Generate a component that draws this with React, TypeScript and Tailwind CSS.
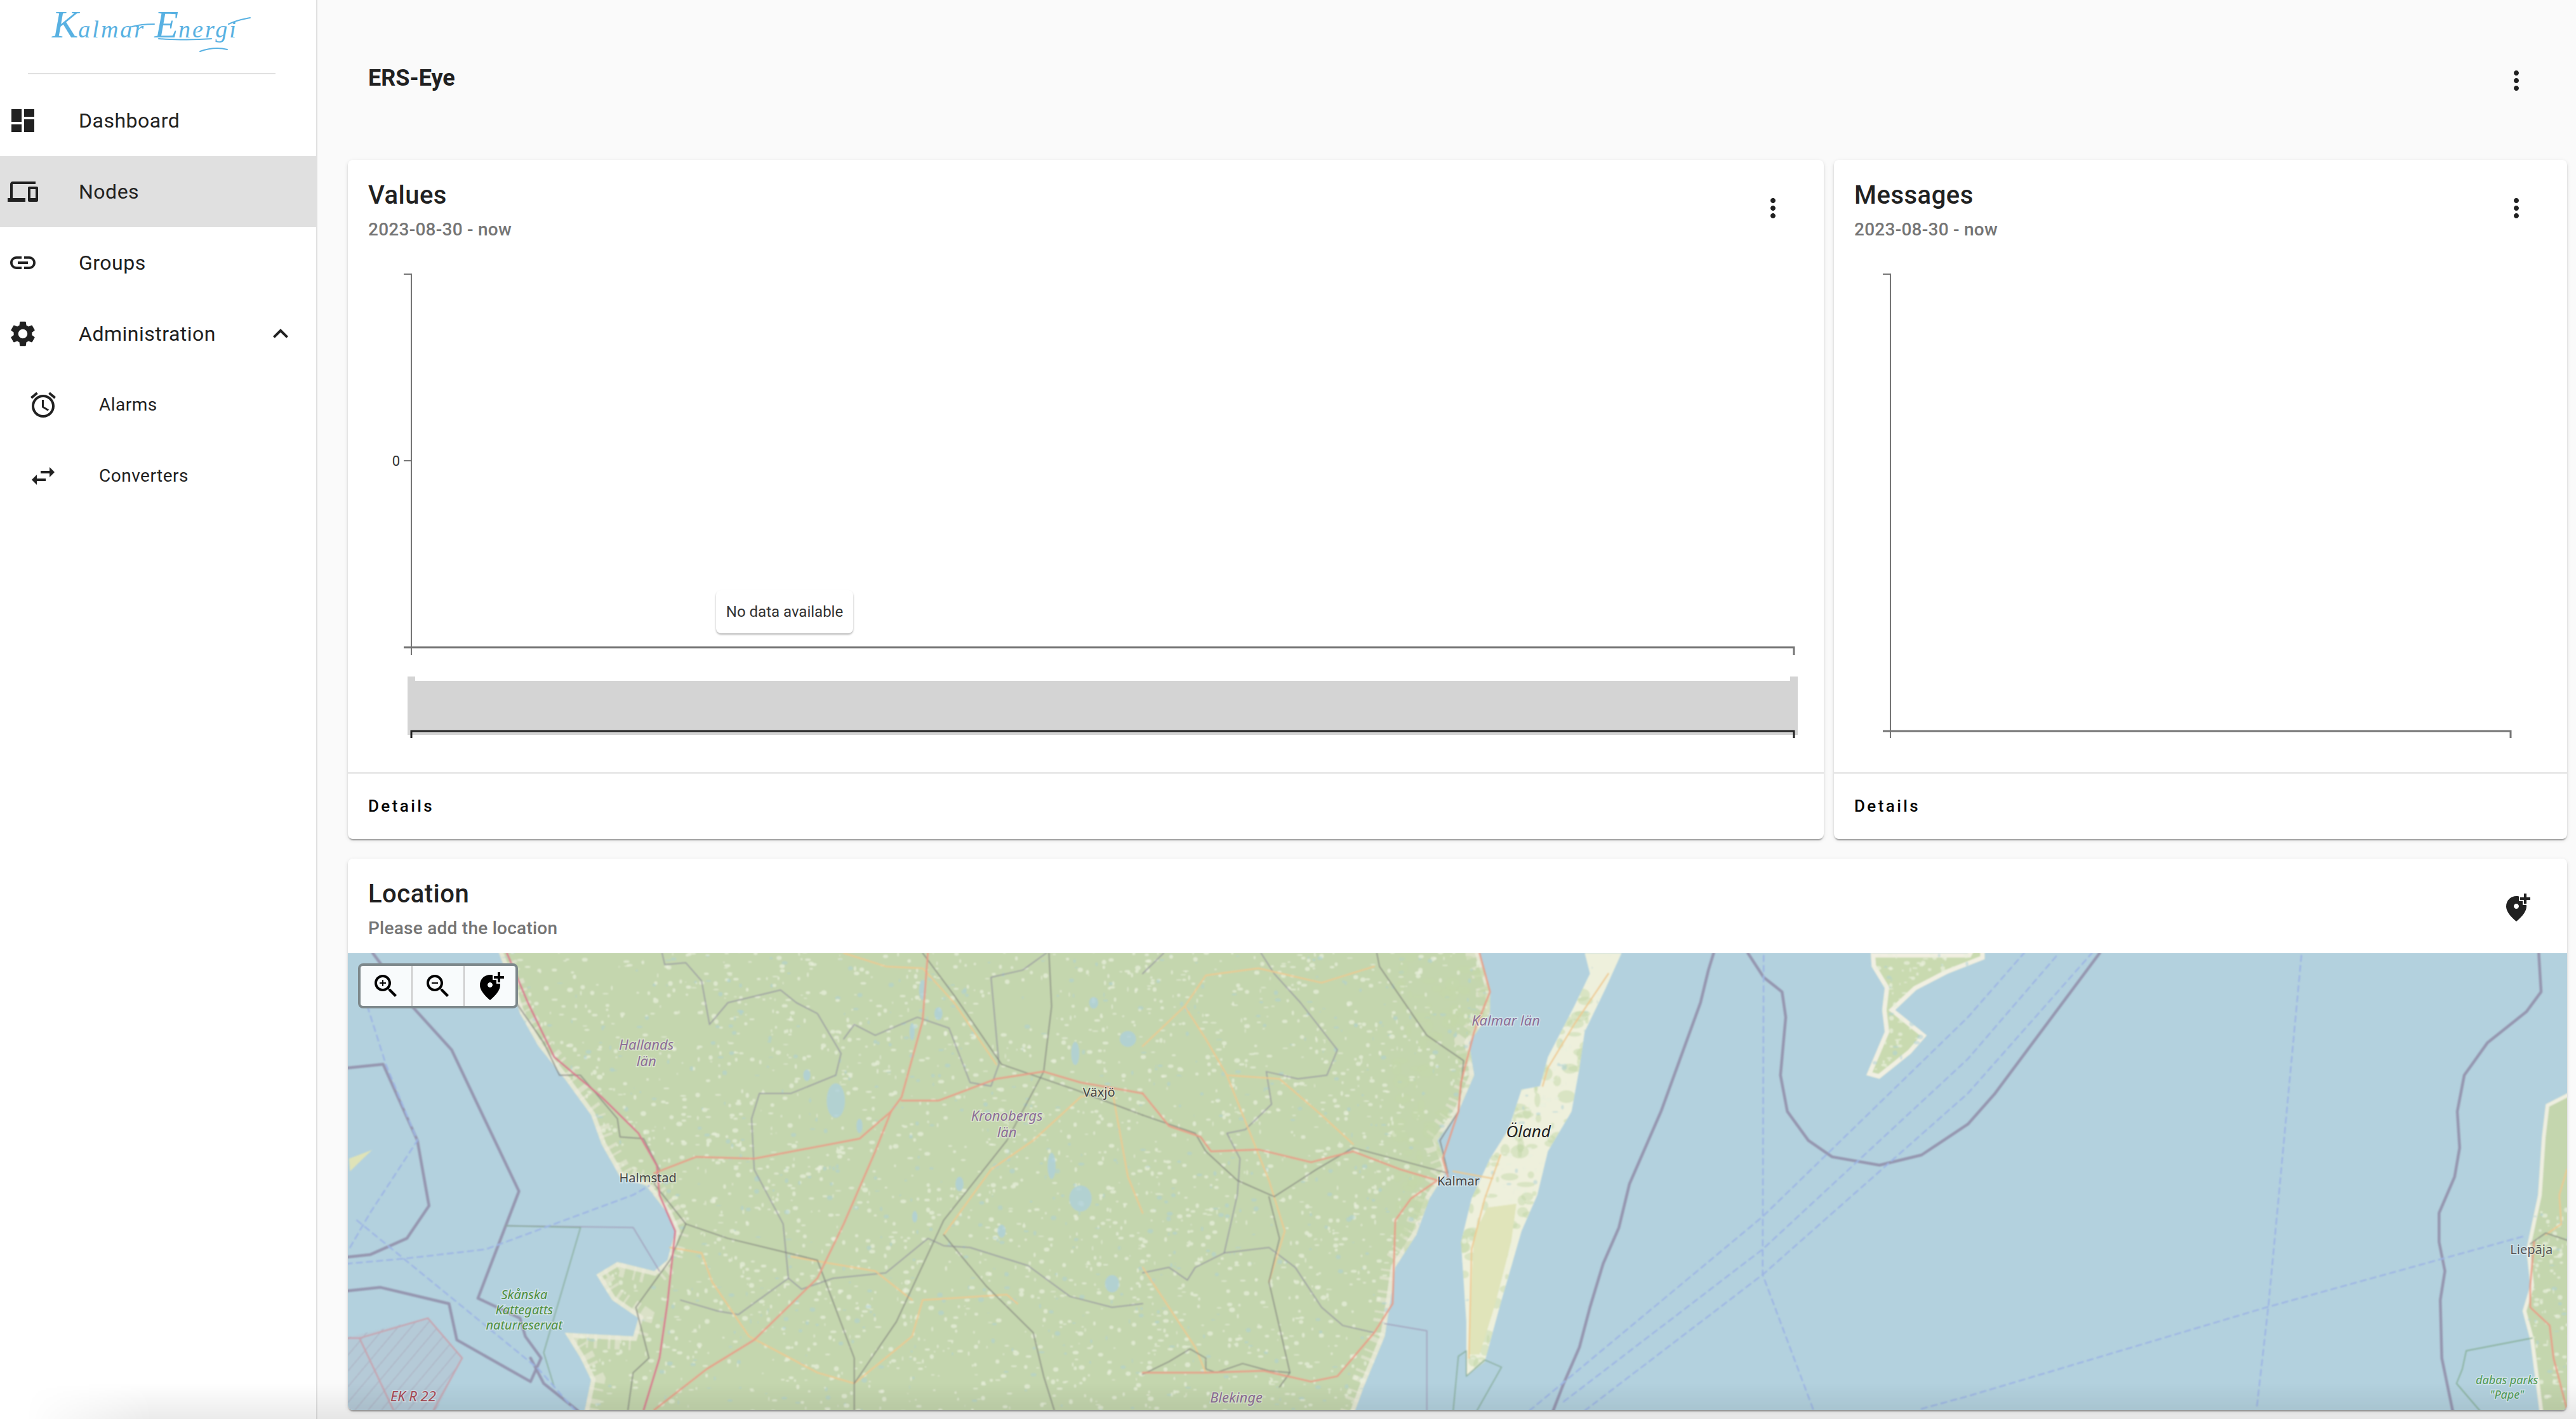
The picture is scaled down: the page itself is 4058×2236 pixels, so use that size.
import React from "react";

type Pt = [number, number];
const ZX4 = 1568 / 1300;
const ZX6 = 1568 / 958;
const ZY = 1.75;
const p4 = (x: number, y: number): Pt => [500 + x / ZX4, 1340 + y / ZY];
const p5 = (x: number, y: number): Pt => [1800 + x / ZX4, 1340 + y / ZY];
const p6 = (x: number, y: number): Pt => [3100 + x / ZX6, 1340 + y / ZY];
const pts = (f: (x: number, y: number) => Pt, a: number[]): Pt[] => {
  const r: Pt[] = [];
  for (let i = 0; i < a.length; i += 2) r.push(f(a[i], a[i + 1]));
  return r;
};
const d = (a: Pt[], close = false) =>
  "M" + a.map((p) => p[0].toFixed(1) + " " + p[1].toFixed(1)).join("L") + (close ? "Z" : "");

const mainland = d(
  [
    ...pts(p4, [335, 200, 345, 283, 370, 380, 385, 450, 420, 540, 470, 630, 520, 730, 540, 810, 575, 900, 625, 925, 665, 1000, 680, 1050, 665, 1130, 640, 1160, 570, 1135, 530, 1170, 560, 1240, 610, 1290, 600, 1340, 470, 1330, 500, 1400, 520, 1460, 500, 1600]),
    ...pts(p5, [390, 1600, 420, 1480, 460, 1340, 470, 1250, 480, 1150, 520, 1060, 545, 960, 580, 880, 560, 800, 600, 720, 630, 620, 620, 530, 660, 450, 660, 380, 640, 283, 635, 200]),
  ],
  true
);
const oland = d(pts(p5, [840, 283, 910, 283, 880, 380, 840, 500, 830, 600, 815, 720, 770, 830, 750, 950, 720, 1050, 680, 1250, 650, 1410, 615, 1450, 615, 1300, 605, 1080, 625, 960, 660, 850, 695, 770, 720, 660, 755, 650, 770, 570, 820, 430, 850, 340]), true);
const alvar = d(pts(p5, [655, 985, 710, 975, 700, 1080, 670, 1250, 640, 1390, 620, 1390, 625, 1200, 630, 1060]), true);
const gotland = d(pts(p5, [1380, 200, 1385, 283, 1568, 283, 1600, 200, 1600, 300, 1530, 340, 1470, 385, 1430, 440, 1490, 510, 1460, 560, 1400, 630, 1375, 620, 1410, 500, 1405, 440, 1410, 380, 1385, 320]), true);
const latvia = d(pts(p6, [1600, 640, 1490, 700, 1480, 790, 1470, 950, 1440, 1100, 1450, 1200, 1430, 1270, 1450, 1350, 1480, 1600, 1600, 1600]), true);
const anholt = d(pts(p4, [60, 850, 104, 826, 85, 852, 62, 885]), true);

const lines: { p: Pt[]; c: string; w: number; dash?: string; o?: number }[] = [
  ...[
    pts(p4, [105, 283, 180, 430, 255, 550, 383, 940, 305, 1235, 385, 1290, 395, 1340, 425, 1400, 405, 1465, 265, 1350, 250, 1250, 120, 1205, 55, 1215]),
    pts(p4, [55, 600, 125, 590, 190, 800, 212, 980, 170, 1070, 100, 1115, 55, 1122]),
    pts(p4, [405, 1400, 430, 1470, 495, 1545]),
    pts(p5, [1085, 283, 1075, 330, 1060, 420, 985, 720, 925, 920, 905, 1040, 875, 1140, 850, 1260, 830, 1370, 800, 1470, 780, 1545]),
    [...pts(p5, [1150, 283, 1180, 350, 1215, 390, 1222, 460, 1212, 620, 1225, 720, 1265, 800, 1310, 845, 1400, 868, 1480, 840, 1568, 755]), ...pts(p6, [70, 670, 340, 283])],
    pts(p6, [1472, 283, 1478, 390, 1440, 445, 1340, 530, 1280, 620, 1262, 720, 1268, 820, 1255, 900, 1215, 1000, 1215, 1080, 1230, 1160, 1218, 1240, 1222, 1400, 1250, 1545]),
  ].map((p) => ({ p, c: "#9290ab", w: 4.5, o: 0.9 })),
  { p: pts(p4, [358, 1035, 600, 1040, 650, 1160]), c: "#a09cb8", w: 2, o: 0.8 },
  { p: pts(p5, [460, 1305, 540, 1325, 540, 1545]), c: "#a09cb8", w: 2, o: 0.8 },
  { p: pts(p4, [358, 1035, 500, 1040, 430, 1385, 450, 1480]), c: "#86ab97", w: 2, o: 0.8 },
  { p: pts(p5, [590, 1545, 600, 1395, 615, 1380, 615, 1450, 650, 1405, 682, 1425, 635, 1545]), c: "#86ab97", w: 2, o: 0.8 },
  { p: pts(p6, [1455, 1345, 1285, 1380, 1275, 1430, 1260, 1470, 1320, 1545]), c: "#7ea98c", w: 2, o: 0.8 },
  ...[
    pts(p4, [95, 430, 130, 590, 190, 800, 100, 1000, 60, 1100]),
    pts(p4, [55, 1140, 170, 1125, 320, 1100, 600, 950, 630, 925]),
    pts(p4, [75, 1020, 420, 1430, 490, 1545]),
    pts(p5, [1180, 290, 1178, 1170, 1275, 1545]),
    [...pts(p5, [735, 1545, 1178, 1010]), ...pts(p6, [0, 460, 145, 283])],
    [...pts(p5, [800, 1520, 1178, 1100]), ...pts(p6, [0, 575, 235, 283])],
    [...pts(p5, [840, 1545, 1178, 1170]), ...pts(p6, [0, 670, 320, 283])],
    pts(p6, [860, 290, 775, 1255, 745, 1535]),
    [...pts(p5, [1480, 1540, 1568, 1505]), ...pts(p6, [770, 1260, 1430, 1065])],
  ].map((p) => ({ p, c: "#9db5e4", w: 2.5, dash: "9 7" })),
  ...[
    pts(p4, [655, 283, 660, 315, 700, 310, 730, 360, 745, 480, 780, 420, 880, 385, 910, 420, 950, 450, 995, 560, 985, 620, 900, 670, 840, 670, 825, 740, 830, 880, 885, 1030, 895, 1180, 920, 1210, 980, 1180, 1080, 1165, 1160, 1070, 1190, 1090, 1240, 1095, 1350, 1145, 1430, 1230, 1510, 1260, 1568, 1250]),
    pts(p4, [1000, 520, 1020, 480, 1060, 510, 1140, 460, 1200, 490, 1240, 640, 1280, 650, 1295, 590, 1280, 350, 1340, 330, 1385, 283]),
    pts(p4, [690, 1240, 760, 1270, 800, 1280, 895, 1180]),
    pts(p5, [225, 283, 250, 340, 300, 420, 370, 550, 350, 620, 295, 630, 235, 610, 245, 700, 195, 770, 160, 780, 185, 850, 180, 950, 155, 1110, 100, 1150, 85, 1185, 50, 1150, 0, 1165]),
    pts(p5, [155, 1110, 240, 1095, 290, 1150, 340, 1260, 380, 1310, 440, 1330]),
    pts(p5, [40, 283, 0, 340]),
  ].map((p) => ({ p, c: "#8f8a9c", w: 2, o: 0.7 })),
  ...[
    pts(p4, [1000, 283, 1080, 320, 1150, 325, 1210, 420, 1290, 590]),
    pts(p4, [670, 1095, 730, 1110, 750, 1190, 820, 1340, 950, 1440, 1020, 1470, 1130, 1340, 1150, 1240, 1310, 1225, 1330, 1250]),
    pts(p4, [900, 1120, 1060, 1160, 1130, 1240]),
    pts(p4, [1190, 1060, 1280, 880, 1360, 800, 1450, 680, 1510, 660, 1540, 900, 1568, 1000]),
    pts(p5, [0, 540, 80, 430, 120, 345, 220, 325, 340, 365, 440, 320]),
    pts(p5, [80, 430, 120, 520, 160, 620, 260, 630, 340, 730, 400, 810]),
    pts(p5, [160, 620, 240, 910, 270, 1050, 240, 1190]),
    pts(p5, [0, 1150, 100, 1370, 120, 1440]),
    pts(p5, [885, 340, 820, 480, 770, 600, 760, 650]),
    pts(p5, [680, 840, 650, 960, 625, 1100, 620, 1400]),
    pts(p5, [590, 885, 665, 905]),
    pts(p6, [1545, 880, 1525, 950, 1530, 1030, 1490, 1060]),
  ].map((p) => ({ p, c: "#eec98f", w: 2.5, o: 0.9 })),
  ...[
    pts(p4, [380, 425, 430, 530, 460, 620, 500, 620, 570, 740, 575, 790, 620, 795, 650, 880, 640, 920, 700, 1030, 780, 1070, 950, 1130, 1020, 1400, 1020, 1543]),
    pts(p4, [700, 1030, 670, 1130, 605, 1260, 630, 1400, 600, 1440, 590, 1543]),
    pts(p4, [1150, 283, 1210, 400, 1300, 590, 1440, 660, 1568, 730]),
    pts(p4, [1390, 283, 1395, 430, 1380, 610, 1310, 800, 1190, 1020, 1100, 1300, 1020, 1470]),
    pts(p4, [1190, 1060, 1270, 1200, 1360, 1330, 1380, 1450, 1400, 1543]),
    pts(p5, [445, 283, 450, 320, 540, 510, 610, 580, 600, 720, 565, 800, 580, 890, 400, 820, 330, 880, 250, 955, 180, 910, 120, 830, 100, 780, 0, 730]),
    pts(p5, [240, 955, 260, 1070, 240, 1190, 280, 1440, 260, 1480]),
    pts(p5, [0, 1445, 50, 1410, 90, 1375, 120, 1400, 120, 1430, 140, 1440, 190, 1415, 240, 1435, 280, 1440]),
    pts(p6, [1450, 1085, 1490, 1055, 1545, 1075]),
  ].map((p) => ({ p, c: "#80807c", w: 2, o: 0.75 })),
  { p: pts(p4, [360, 283, 400, 420, 450, 570, 540, 680, 610, 780, 645, 870, 650, 950, 680, 1050, 665, 1250, 650, 1400, 620, 1543]), c: "#d9768e", w: 3, o: 0.9 },
  ...[
    pts(p4, [640, 890, 720, 845, 830, 850, 1030, 795, 1090, 720, 1060, 830, 1000, 1030, 950, 1180, 830, 1350, 740, 1430, 640, 1543]),
    pts(p4, [1160, 283, 1150, 470, 1110, 680, 1090, 720]),
    pts(p4, [1110, 690, 1180, 690, 1290, 630, 1380, 610, 1450, 640, 1568, 670]),
    pts(p5, [0, 670, 50, 760, 110, 790, 130, 830, 220, 825, 320, 860, 400, 830, 490, 880, 560, 910, 510, 960, 480, 1020, 475, 1250, 440, 1330, 370, 1450, 320, 1465, 230, 1435, 120, 1440, 0, 1440]),
    pts(p5, [640, 283, 660, 390, 630, 500, 605, 640, 600, 720, 570, 850, 580, 900]),
    pts(p6, [1460, 1080, 1450, 1200, 1450, 1260, 1500, 1310, 1510, 1400, 1545, 1543]),
  ].map((p) => ({ p, c: "#ea9a85", w: 3, o: 0.85 })),
];

const speckles = (() => {
  let s = 12345;
  const rnd = () => {
    s = (s * 1664525 + 1013904223) % 4294967296;
    return s / 4294967296;
  };
  const out: { x: number; y: number; rx: number; ry: number; kind: number }[] = [];
  for (let i = 0; i < 5200; i++) {
    const latv = i % 40 === 0;
    const olandPick = i % 12 === 1;
    const gotPick = i % 24 === 2;
    out.push({
      x: latv ? 3980 + rnd() * 70 : olandPick ? 2200 + rnd() * 300 : gotPick ? 2930 + rnd() * 170 : 780 + rnd() * 1900,
      y: latv ? 1900 + rnd() * 320 : gotPick ? 1500 + rnd() * 210 : 1500 + rnd() * 725,
      rx: 0.8 + rnd() * 4,
      ry: 0.8 + rnd() * 3,
      kind: olandPick ? 2 : rnd() < 0.78 ? 0 : 1,
    });
  }
  return out;
})();

const lakes: [number, number, number, number][] = [
  [985, 690, 18, 48], [1150, 385, 7, 28], [1130, 500, 5, 24], [930, 620, 7, 16], [1395, 870, 8, 36], [1450, 960, 22, 36],
  [1510, 1195, 14, 24], [1180, 450, 8, 18], [1440, 560, 8, 32], [1220, 920, 8, 20], [1300, 1050, 8, 18], [1030, 760, 6, 20],
  [1540, 520, 16, 22], [1475, 420, 9, 16], [1135, 1010, 5, 16],
];

const Label = ({ at, t, c, s, i, b }: { at: Pt; t: string; c: string; s: number; i?: boolean; b?: boolean }) => (
  <text
    x={at[0]}
    y={at[1] + s * 0.36}
    textAnchor="middle"
    fill={c}
    fontSize={s}
    fontStyle={i ? "italic" : "normal"}
    fontWeight={b ? 600 : 400}
    fontFamily="'Noto Sans', sans-serif"
    stroke="#ffffff"
    strokeOpacity={0.4}
    strokeWidth={3}
    paintOrder="stroke"
  >
    {t}
  </text>
);

const MapArt = () => (
  <svg viewBox="548 1502 3496 720" className="block w-full h-full" preserveAspectRatio="none">
    <defs>
      <clipPath id="land">
        <path d={mainland} />
        <path d={gotland} />
        <path d={latvia} />
        <path d={oland} />
      </clipPath>
      <clipPath id="danger">
        <path d={d(pts(p4, [50, 1345, 210, 1290, 275, 1400, 220, 1560, 50, 1560]), true)} />
      </clipPath>
      <pattern id="hatch" width="16" height="16" patternUnits="userSpaceOnUse" patternTransform="rotate(40)">
        <line x1="0" y1="0" x2="0" y2="16" stroke="#a6a9bd" strokeWidth="2" />
      </pattern>
      <filter id="soft" x="0" y="0" width="1" height="1">
        <feGaussianBlur stdDeviation="1.3" />
      </filter>
    </defs>
    <rect x="548" y="1502" width="3496" height="720" fill="#b3d1de" />
    <g filter="url(#soft)">
      <path d={anholt} fill="#dfe3b8" />
      <path d={mainland} fill="#c4d6ae" />
      <path d={gotland} fill="#c9dab0" />
      <path d={latvia} fill="#c4d6ae" />
      <path d={oland} fill="#eef0dc" />
      <path d={alvar} fill="#e0e4ba" />
      <g clipPath="url(#land)">
        <path d={mainland} fill="none" stroke="#ecebdc" strokeWidth="14" opacity="0.8" />
        <path d={mainland} fill="none" stroke="#ecebdc" strokeWidth="44" strokeDasharray="5 9 3 14 8 7 4 17" opacity="0.55" />
        <path d={gotland} fill="none" stroke="#f1efe2" strokeWidth="14" />
        <path d={latvia} fill="none" stroke="#eeeee0" strokeWidth="12" />
        {speckles.map((k, i) => (
          <ellipse
            key={i}
            cx={k.x}
            cy={k.y}
            rx={k.kind === 2 ? k.rx * 3 : k.rx}
            ry={k.kind === 2 ? k.ry * 3 : k.ry}
            fill={k.kind === 0 ? "#eaf0dd" : k.kind === 1 ? "#abd0d6" : "#c3d7a9"}
            opacity={k.kind === 0 ? 0.7 : 0.5}
          />
        ))}
        {lakes.map((l, i) => {
          const c = p4(l[0], l[1]);
          return <ellipse key={i} cx={c[0]} cy={c[1]} rx={l[2] * 0.8} ry={l[3] * 0.57} fill="#aed0da" opacity="0.8" />;
        })}
        <path d={alvar} fill="#e0e4ba" />
      </g>
      <rect x="548" y="1502" width="400" height="720" fill="url(#hatch)" clipPath="url(#danger)" />
      <rect x="548" y="1502" width="400" height="720" fill="#c59aa6" opacity="0.12" clipPath="url(#danger)" />
      <path d={d(pts(p4, [80, 1345, 210, 1290, 275, 1400, 220, 1545]))} fill="none" stroke="#c7a4b0" strokeWidth="2.5" />
      <path d={d(pts(p4, [50, 1345, 80, 1345, 145, 1545]))} fill="none" stroke="#c7a4b0" strokeWidth="2.5" />
      {lines.map((l, i) => (
        <path key={i} d={d(l.p)} fill="none" stroke={l.c} strokeWidth={l.w} strokeOpacity={l.o ?? 1} strokeDasharray={l.dash} strokeLinejoin="round" strokeLinecap="round" />
      ))}
    </g>
    <Label at={p4(625, 535)} t="Hallands" c="#8c6e96" s={22} i />
    <Label at={p4(625, 582)} t="län" c="#8c6e96" s={22} i />
    <Label at={p4(1310, 732)} t="Kronobergs" c="#8c6e96" s={22} i />
    <Label at={p4(1310, 778)} t="län" c="#8c6e96" s={22} i />
    <Label at={p4(1485, 667)} t="Växjö" c="#444444" s={20} />
    <Label at={p4(628, 902)} t="Halmstad" c="#444444" s={20} />
    <Label at={p4(393, 1224)} t="Skånska" c="#4f8f3f" s={20} i />
    <Label at={p4(393, 1266)} t="Kattegatts" c="#4f8f3f" s={20} i />
    <Label at={p4(393, 1308)} t="naturreservat" c="#4f8f3f" s={20} i />
    <Label at={p4(182, 1506)} t="EK R 22" c="#a84a55" s={22} i />
    <Label at={p5(690, 470)} t="Kalmar län" c="#8c6e96" s={22} i />
    <Label at={p5(733, 775)} t="Öland" c="#222222" s={26} i />
    <Label at={p5(600, 912)} t="Kalmar" c="#444444" s={20} />
    <Label at={p5(178, 1508)} t="Blekinge" c="#8c6e96" s={22} i />
    <Label at={p6(1453, 1100)} t="Liepāja" c="#555555" s={20} />
    <Label at={p6(1390, 1460)} t="dabas parks" c="#4f9a55" s={18} i />
    <Label at={p6(1390, 1500)} t="&quot;Pape&quot;" c="#4f9a55" s={18} i />
  </svg>
);

const I = {
  dashboard: "M3 13h8V3H3v10zm0 8h8v-6H3v6zm10 0h8V11h-8v10zm0-18v6h8V3h-8z",
  devices: "M4 6h18V4H4c-1.1 0-2 .9-2 2v11H0v3h14v-3H4V6zm19 2h-6c-.55 0-1 .45-1 1v10c0 .55.45 1 1 1h6c.55 0 1-.45 1-1V9c0-.55-.45-1-1-1zm-1 9h-4v-7h4v7z",
  link: "M3.9 12c0-1.71 1.39-3.1 3.1-3.1h4V7H7c-2.76 0-5 2.24-5 5s2.24 5 5 5h4v-1.9H7c-1.71 0-3.1-1.39-3.1-3.1zM8 13h8v-2H8v2zm9-6h-4v1.9h4c1.71 0 3.1 1.39 3.1 3.1s-1.39 3.1-3.1 3.1h-4V17h4c2.76 0 5-2.24 5-5s-2.24-5-5-5z",
  settings: "M19.14 12.94c.04-.3.06-.61.06-.94 0-.32-.02-.64-.07-.94l2.03-1.58c.18-.14.23-.41.12-.61l-1.92-3.32c-.12-.22-.37-.29-.59-.22l-2.39.96c-.5-.38-1.03-.7-1.62-.94l-.36-2.54c-.04-.24-.24-.41-.48-.41h-3.84c-.24 0-.43.17-.47.41l-.36 2.54c-.59.24-1.13.57-1.62.94l-2.39-.96c-.22-.08-.47 0-.59.22L2.74 8.87c-.12.21-.08.47.12.61l2.03 1.58c-.05.3-.09.63-.09.94s.02.64.07.94l-2.03 1.58c-.18.14-.23.41-.12.61l1.92 3.32c.12.22.37.29.59.22l2.39-.96c.5.38 1.03.7 1.62.94l.36 2.54c.05.24.24.41.48.41h3.84c.24 0 .44-.17.47-.41l.36-2.54c.59-.24 1.13-.56 1.62-.94l2.39.96c.22.08.47 0 .59-.22l1.92-3.32c.12-.22.07-.47-.12-.61l-2.01-1.58zM12 15.6c-1.98 0-3.6-1.62-3.6-3.6s1.62-3.6 3.6-3.6 3.6 1.62 3.6 3.6-1.62 3.6-3.6 3.6z",
  less: "M12 8l-6 6 1.41 1.41L12 10.83l4.59 4.58L18 14z",
  alarm: "M22 5.72l-4.6-3.86-1.29 1.53 4.6 3.86L22 5.72zM7.88 3.39L6.6 1.86 2 5.71l1.29 1.53 4.59-3.85zM12.5 8H11v6l4.75 2.85.75-1.23-4-2.37V8zM12 4c-4.97 0-9 4.03-9 9s4.02 9 9 9c4.97 0 9-4.03 9-9s-4.03-9-9-9zm0 16c-3.87 0-7-3.13-7-7s3.13-7 7-7 7 3.13 7 7-3.13 7-7 7z",
  swap: "M6.99 11L3 15l3.99 4v-3H14v-2H6.99v-3zM21 9l-3.99-4v3H10v2h7.01v3L21 9z",
  more: "M12 8c1.1 0 2-.9 2-2s-.9-2-2-2-2 .9-2 2 .9 2 2 2zm0 2c-1.1 0-2 .9-2 2s.9 2 2 2 2-.9 2-2-.9-2-2-2zm0 6c-1.1 0-2 .9-2 2s.9 2 2 2 2-.9 2-2-.9-2-2-2z",
  addLoc: "M20 1v3h3v2h-3v3h-2V6h-3V4h3V1h2zm-8 12c1.1 0 2-.9 2-2s-.9-2-2-2-2 .9-2 2 .9 2 2 2zm2-9.75V7h3v3h2.92c.05.39.08.79.08 1.2 0 3.32-2.67 7.25-8 11.8-5.33-4.55-8-8.48-8-11.8C4 6.22 7.8 3 12 3c.68 0 1.35.08 2 .25z",
  zoomBase: "M15.5 14h-.79l-.28-.27C15.41 12.59 16 11.11 16 9.5 16 5.91 13.09 3 9.5 3S3 5.91 3 9.5 5.91 16 9.5 16c1.61 0 3.09-.59 4.23-1.57l.27.28v.79l5 4.99L20.49 19l-4.99-5zm-6 0C7.01 14 5 11.99 5 9.5S7.01 5 9.5 5 14 7.01 14 9.5 11.99 14 9.5 14z",
};

const Icon = ({ d: path, c = "text-[#212121]" }: { d: string; c?: string }) => (
  <svg viewBox="0 0 24 24" className={`w-12 h-12 shrink-0 fill-current ${c}`}>
    <path d={path} />
  </svg>
);

const NavItem = ({ icon, label, active, nested, end }: { icon: string; label: string; active?: boolean; nested?: boolean; end?: string }) => (
  <div className={`flex items-center h-[112px] w-[498px] ${nested ? "pl-[44px]" : "pl-[12px]"} ${active ? "bg-[#e0e0e0]" : ""}`}>
    <Icon d={icon} />
    <span className={`ml-[64px] text-[#212121] ${nested ? "text-[28px]" : "text-[32px]"} tracking-[0.5px]`}>{label}</span>
    {end && (
      <span className="ml-auto mr-[32px]">
        <Icon d={end} />
      </span>
    )}
  </div>
);

const CardHead = ({ title, sub, action, h }: { title: string; sub: string; action: React.ReactNode; h: string }) => (
  <div className={`flex justify-between shrink-0 pl-[32px] pr-[56px] ${h}`}>
    <div className="pt-[32px]">
      <div className="text-[40px] leading-[48px] font-medium tracking-[0.5px] text-[#212121]">{title}</div>
      <div className="text-[28px] leading-[40px] mt-[10px] font-medium tracking-[0.25px] text-[#757575]">{sub}</div>
    </div>
    {action}
  </div>
);

const More = () => (
  <div className="mt-[52px]">
    <Icon d={I.more} />
  </div>
);

const Footer = () => (
  <div className="h-[105px] shrink-0 border-t-2 border-[#e0e0e0] flex items-center pl-[32px]">
    <span className="text-[26px] font-medium tracking-[3.4px] text-black">Details</span>
  </div>
);

const cardClass =
  "bg-white rounded-[8px] shadow-[0_4px_2px_-2px_rgba(0,0,0,0.2),0_2px_2px_0_rgba(0,0,0,0.14),0_2px_6px_0_rgba(0,0,0,0.12)]";

const ValuesChart = () => (
  <svg viewBox="548 400 2325 817" className="block w-full flex-1 min-h-0">
    <g fill="none" stroke="#757575" strokeWidth="2">
      <path d="M636 432H648V1032" />
      <path d="M636 726H648" />
      <path d="M636 1020H2826V1032" strokeWidth="3" />
    </g>
    <text x="630" y="734" textAnchor="end" fontSize="22" fill="#333333" fontFamily="Roboto, sans-serif">0</text>
    <rect x="642" y="1073" width="2190" height="85" fill="#d4d4d4" />
    <rect x="642" y="1066" width="12" height="92" fill="#d4d4d4" />
    <rect x="2820" y="1066" width="12" height="92" fill="#d4d4d4" />
    <path d="M648 1163V1152H2826V1163" fill="none" stroke="#222222" strokeWidth="3" />
  </svg>
);

const MessagesChart = () => (
  <svg viewBox="2889 400 1155 817" className="block w-full flex-1 min-h-0">
    <g fill="none" stroke="#757575" strokeWidth="2">
      <path d="M2966 432H2978V1163" />
      <path d="M2966 1152H3955V1163" strokeWidth="3" />
    </g>
  </svg>
);

export default function App() {
  return (
    <div className="relative flex w-[4058px] h-[2236px] overflow-hidden bg-[#fafafa] font-[Roboto,sans-serif]">
      <aside className="w-[500px] shrink-0 bg-white border-r-2 border-[#e0e0e0]">
        <div className="h-[134px] relative">
          <div className="h-[116px] pl-[82px] pt-[0px] text-[#58b1e2] font-['Liberation_Serif',serif] italic leading-[76px] whitespace-nowrap">
            <span className="text-[62px]">K</span>
            <span className="text-[38px] tracking-[3px]">almar</span>
            <span className="text-[62px] ml-[14px]">E</span>
            <span className="text-[38px] tracking-[3px]">nergi</span>
          </div>
          <svg viewBox="0 0 500 116" className="absolute left-0 top-0 w-[500px] h-[116px] pointer-events-none">
            <g fill="none" stroke="#58b1e2" strokeWidth="2" strokeLinecap="round">
              <path d="M208 42C222 38 232 38 243 38" />
              <path d="M250 61C280 64 310 62 333 61" />
              <path d="M315 81C335 74 350 76 358 78" />
              <path d="M360 38C372 32 384 30 394 28" />
            </g>
          </svg>
          <div className="absolute left-[44px] top-[115px] w-[390px] h-[2px] bg-[#e0e0e0]" />
        </div>
        <NavItem icon={I.dashboard} label="Dashboard" />
        <NavItem icon={I.devices} label="Nodes" active />
        <NavItem icon={I.link} label="Groups" />
        <NavItem icon={I.settings} label="Administration" end={I.less} />
        <NavItem icon={I.alarm} label="Alarms" nested />
        <NavItem icon={I.swap} label="Converters" nested />
      </aside>

      <main className="flex-1 min-w-0 pl-[48px] pr-[14px]">
        <div className="h-[252px] flex items-center justify-between pl-[32px] pr-[56px] pb-[6px]">
          <h1 className="text-[36px] font-bold text-[#212121]">ERS-Eye</h1>
          <div className="mt-[8px]">
            <Icon d={I.more} />
          </div>
        </div>

        <div className="flex gap-[16px] h-[1070px]">
          <section className={`${cardClass} relative w-[2325px] flex flex-col`}>
            <CardHead title="Values" sub="2023-08-30 - now" action={<More />} h="h-[148px]" />
            <ValuesChart />
            <div className="absolute left-[580px] top-[678px] w-[216px] h-[68px] bg-white rounded-[8px] shadow-[0_2px_3px_rgba(0,0,0,0.3)] flex items-center justify-center text-[24px] text-[#333333]">
              No data available
            </div>
            <Footer />
          </section>
          <section className={`${cardClass} w-[1155px] flex flex-col`}>
            <CardHead title="Messages" sub="2023-08-30 - now" action={<More />} h="h-[148px]" />
            <MessagesChart />
            <Footer />
          </section>
        </div>

        <section className={`${cardClass} relative mt-[31px] h-[869px] flex flex-col overflow-hidden`}>
          <CardHead
            title="Location"
            sub="Please add the location"
            action={
              <div className="mt-[53px]">
                <Icon d={I.addLoc} />
              </div>
            }
            h="h-[149px]"
          />
          <div className="relative flex-1 min-h-0">
            <MapArt />
            <div className="absolute left-[16px] top-[16px] w-[252px] h-[71px] flex rounded-[8px] border-4 border-[#7d888b] bg-[#f8fbfc]">
              <div className="flex-1 flex items-center justify-center border-r-2 border-[#c8c8c8]">
                <svg viewBox="0 0 24 24" className="w-12 h-12 fill-black">
                  <path d={I.zoomBase} />
                  <path d="M12 10h-2v2H9v-2H7V9h2V7h1v2h2v1z" />
                </svg>
              </div>
              <div className="flex-1 flex items-center justify-center border-r-2 border-[#c8c8c8]">
                <svg viewBox="0 0 24 24" className="w-12 h-12 fill-black">
                  <path d={I.zoomBase} />
                  <path d="M7 9h5v1H7z" />
                </svg>
              </div>
              <div className="flex-1 flex items-center justify-center">
                <Icon d={I.addLoc} c="text-black" />
              </div>
            </div>
          </div>
        </section>
      </main>

      <div className="absolute left-0 right-0 bottom-0 h-[56px] pointer-events-none bg-linear-to-b from-transparent to-black/[0.08] [mask-image:linear-gradient(to_right,transparent_40px,black_240px)]" />
    </div>
  );
}
